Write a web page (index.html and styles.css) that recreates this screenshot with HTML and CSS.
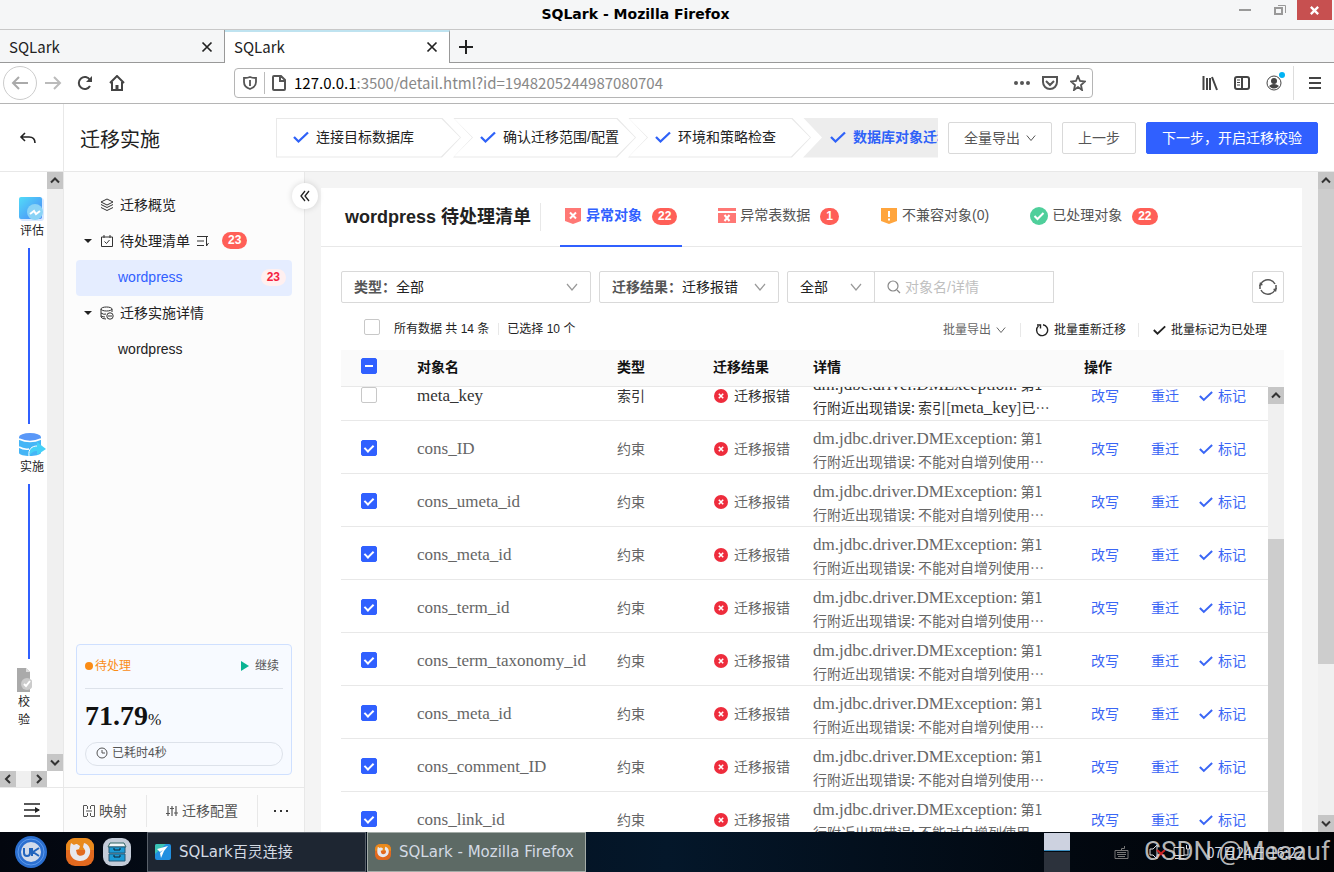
FILE: index.html
```html
<!DOCTYPE html>
<html lang="zh-CN">
<head>
    <meta charset="UTF-8">
    <meta name="viewport" content="width=device-width, initial-scale=1.0">
    <title>SQLark</title>
    <link rel="stylesheet" href="styles.css">
</head>
<body>
    <!-- shared icons -->
    <svg class="sprite" aria-hidden="true">
        <symbol id="check" viewBox="0 0 16 16"><path d="M1 8l4.500 4.500L15 3.500" fill="none" stroke="currentColor" stroke-width="2.300"/></symbol>
        <symbol id="down" viewBox="0 0 12 12"><path d="M1 3l5 6 5-6" fill="none" stroke="currentColor" stroke-width="1.200"/></symbol>
        <symbol id="close" viewBox="0 0 12 12"><path d="M1.500 1.500l9 9M10.500 1.500l-9 9" fill="none" stroke="currentColor" stroke-width="1.700"/></symbol>
        <symbol id="arrow" viewBox="0 0 16 16"><path d="M4 10l4-4 4 4" fill="none" stroke="#333" stroke-width="2"/></symbol>
        <symbol id="fail" viewBox="0 0 14 14"><circle cx="7" cy="7" r="7" fill="#ee2c3c"/><path d="M4.800 4.800l4.400 4.400M9.200 4.800l-4.400 4.400" stroke="#fff" stroke-width="1.600"/></symbol>
        <symbol id="firefox" viewBox="0 0 28 28">
            <rect width="28" height="28" rx="9" fill="#e2691f"/><path d="M0 9a9 9 0 0 1 9-9h10a9 9 0 0 1 9 9v3H0z" fill="#e88a1c"/>
            <path d="M5 5l3 2c1-1 2-1 3-1l3 2-1 3-3 1 1 4c2 3 7 2 8-1 1-3-1-4-2-6l1-4c4 1 7 5 6 10-1 5-5 8-10 8S4 19 4 14c0-3 0-6 1-9z" fill="#e8e8ee"/>
        </symbol>
    </svg>

    <div class="titlebar">
        <h1>SQLark - Mozilla Firefox</h1>
        <div class="window-buttons">
            <button aria-label="Minimize"><svg width="12" height="10" viewBox="0 0 12 10"><path d="M0 5h12" stroke="#999" stroke-width="2"/></svg></button>
            <button aria-label="Restore"><svg width="12" height="12" viewBox="0 0 12 12" fill="none" stroke="#999"><path d="M1 4h7v6H1z" stroke-width="2"/><path d="M4 1.500h7.500V9"/></svg></button>
            <button class="window-close" aria-label="Close"><svg width="11" height="11" viewBox="0 0 12 12"><path d="M2 2l8 8M10 2l-8 8" stroke="#fff" stroke-width="2.500"/></svg></button>
        </div>
    </div>

    <div class="tabstrip">
        <div class="browser-tab"><span>SQLark</span><button aria-label="Close tab"><svg width="12" height="12"><use href="#close"/></svg></button></div>
        <div class="browser-tab current"><span>SQLark</span><button aria-label="Close tab"><svg width="12" height="12"><use href="#close"/></svg></button></div>
        <button class="new-tab" aria-label="New tab"><svg width="14" height="14" viewBox="0 0 14 14"><path d="M7 0v14M0 7h14" stroke="#222" stroke-width="2"/></svg></button>
    </div>

    <div class="toolbar">
        <button class="nav-back" aria-label="Back"><svg width="18" height="16" viewBox="0 0 18 16" fill="none" stroke="#aaa" stroke-width="2"><path d="M17 8H2M8 2L2 8l6 6"/></svg></button>
        <button aria-label="Forward"><svg width="18" height="16" viewBox="0 0 18 16" fill="none" stroke="#bbb" stroke-width="2"><path d="M1 8h15M10 2l6 6-6 6"/></svg></button>
        <button aria-label="Reload"><svg width="16" height="16" viewBox="0 0 16 16" fill="none" stroke="#444" stroke-width="2"><path d="M13 11a6 6 0 1 1 0-6"/><path d="M15 1v6H9z" fill="#444" stroke="none"/></svg></button>
        <button aria-label="Home"><svg width="16" height="16" viewBox="0 0 16 16" fill="none" stroke="#444" stroke-width="2"><path d="M1 8l7-7 7 7M3 7v8h10V7"/><path d="M8 15v-5" stroke-width="3"/></svg></button>
        <div class="urlbar">
            <svg width="14" height="16" viewBox="0 0 14 16" fill="none" stroke="#555" stroke-width="1.800"><path d="M7 2C5 3 3 3 1 3v4c0 4 3 6 6 7 3-1 6-3 6-7V3c-2 0-4 0-6-1z"/><path d="M7 5v6"/></svg>
            <i class="url-sep"></i>
            <svg width="14" height="16" viewBox="0 0 14 16" fill="none" stroke="#555" stroke-width="2"><path d="M2 1h7l4 4v9a1 1 0 0 1-1 1H2a1 1 0 0 1-1-1V2a1 1 0 0 1 1-1zM8 1v5h5"/></svg>
            <span class="url"><b>127.0.0.1</b>:3500/detail.html?id=1948205244987080704</span>
            <svg width="16" height="16" viewBox="0 0 16 16" fill="#555"><circle cx="2" cy="8" r="2"/><circle cx="8" cy="8" r="2"/><circle cx="14" cy="8" r="2"/></svg>
            <svg width="16" height="16" viewBox="0 0 16 16" fill="none" stroke="#555" stroke-width="2"><path d="M1 2h14v5a7 7 0 0 1-14 0zM4 6l4 4 4-4"/></svg>
            <svg width="16" height="16" viewBox="0 0 16 16" fill="none" stroke="#555" stroke-width="1.800"><path d="M8 1l2 5 5 .5-4 3.500 1 5-4-3-4 3 1-5-4-3.500L6 6z"/></svg>
        </div>
        <div class="toolbar-end">
            <svg width="16" height="16" viewBox="0 0 16 16" fill="none" stroke="#444" stroke-width="2"><path d="M1.500 1v14M5 3v12M8 3v12M10 2l5 13"/></svg>
            <svg width="16" height="16" viewBox="0 0 16 16" fill="none" stroke="#444" stroke-width="2"><rect x="1" y="2" width="14" height="12" rx="2"/><path d="M8 2v12"/><path d="M3 5h3M3 7.500h3M3 10h3" stroke-width="1"/></svg>
            <span class="account"><svg width="16" height="16" viewBox="0 0 16 16"><circle cx="8" cy="8" r="7" fill="none" stroke="#444"/><circle cx="8" cy="6" r="3" fill="#444"/><path d="M3 11q5-4 10 0-5 5-10 0z" fill="#444"/></svg></span>
            <i class="toolbar-sep"></i>
            <svg width="12" height="14" viewBox="0 0 12 14"><path d="M0 2h12M0 7h12M0 12h12" stroke="#444" stroke-width="2"/></svg>
        </div>
    </div>

    <header class="app-header">
        <button class="back" aria-label="返回"><svg width="18" height="14" viewBox="0 0 18 14" fill="none" stroke="#222" stroke-width="1.600"><path d="M6 1L2 5l4 4M2 5h8q6 0 6 6"/></svg></button>
        <h2>迁移实施</h2>
        <ol class="steps">
            <li><svg width="16" height="16"><use href="#check"/></svg><span>连接目标数据库</span></li>
            <li><svg width="16" height="16"><use href="#check"/></svg><span>确认迁移范围/配置</span></li>
            <li><svg width="16" height="16"><use href="#check"/></svg><span>环境和策略检查</span></li>
            <li class="active"><svg width="16" height="16"><use href="#check"/></svg><span>数据库对象迁移</span></li>
        </ol>
        <div class="header-actions">
            <button class="btn">全量导出 <svg width="10" height="10"><use href="#down"/></svg></button>
            <button class="btn">上一步</button>
            <button class="btn primary">下一步，开启迁移校验</button>
        </div>
    </header>

    <div class="app">
        <aside class="rail">
            <div class="rail-view">
                <div class="rail-items">
                    <div class="rail-item">
                        <svg width="28" height="26" viewBox="0 0 28 26">
                            <defs><linearGradient id="g1" x2="1" y2="1"><stop stop-color="#52dcf8"/><stop offset="1" stop-color="#4a86f8"/></linearGradient></defs>
                            <rect x="2" y="2" width="24" height="23" rx="3" fill="#d6e8ff"/><rect x="1" y="1" width="23" height="22" rx="2" fill="url(#g1)"/>
                            <circle cx="17" cy="16" r="8" fill="#8ad3f6"/><path d="M12 18l4-3 2 3 4-3" fill="none" stroke="#fff" stroke-width="2"/>
                        </svg>
                        <span>评估</span>
                    </div>
                    <i class="rail-line"></i>
                    <div class="rail-item">
                        <svg width="30" height="26" viewBox="0 0 30 26">
                            <path d="M2 5v16c1 4 20 4 22 0V5z" fill="#45b5f6"/><ellipse cx="13" cy="5" rx="11" ry="4" fill="#5a98f8"/>
                            <path d="M2 7q11 5 22 0M2 15q5 3 10 2" fill="none" stroke="#fff" stroke-width="1.500"/>
                            <path d="M12 24c-1-7 3-10 8-10v-4l9 7-9 6v-4c-3 0-5 1-8 5z" fill="#45d0f7"/>
                            <path d="M12 24c-1-7 3-10 8-10" fill="none" stroke="#fff"/>
                        </svg>
                        <span>实施</span>
                    </div>
                    <i class="rail-line"></i>
                    <div class="rail-item narrow">
                        <svg width="16" height="26" viewBox="0 0 16 26"><path d="M1 1h9l4 4v20H1z" fill="#aaa"/><path d="M10 1v4h4z" fill="#ddd"/><circle cx="11" cy="17" r="6" fill="#ccc"/><path d="M8 17l2 2 4-5" fill="none" stroke="#fff" stroke-width="2"/></svg>
                        <span>校验</span>
                    </div>
                </div>
                <div class="scrollbar"><svg><use href="#arrow"/></svg><i></i><svg class="flip"><use href="#arrow"/></svg></div>
            </div>
            <div class="scrollbar-x"><svg class="left"><use href="#arrow"/></svg><svg class="right"><use href="#arrow"/></svg></div>
            <button class="rail-toggle" aria-label="展开"><svg width="18" height="16" viewBox="0 0 18 16"><path d="M1 2h16M1 8h15M1 14h16" stroke="#222" stroke-width="1.500"/><path d="M12 5l5 3-5 3z" fill="#222"/></svg></button>
        </aside>

        <nav class="sidebar">
            <ul class="tree">
                <li><a href="#"><i></i><svg width="14" height="14" viewBox="0 0 14 14" fill="none" stroke="#333"><path d="M7 1l6 3-6 3-6-3zM1 6.500l6 3 6-3M1 9.500l6 3 6-3"/></svg>迁移概览</a></li>
                <li><a href="#"><i class="caret"></i><svg width="14" height="14" viewBox="0 0 14 14" fill="none" stroke="#333"><path d="M1.500 3h11v9.500h-11zM4 1v3M10 1v3M4.500 7.500l2 2 3-3.500"/></svg>待处理清单
                    <svg width="13" height="12" viewBox="0 0 13 12" fill="none" stroke="#333"><path d="M1 1.500h11M1 6h7M1 10.500h7M10.500 1v10l2-3"/></svg><b class="badge">23</b></a></li>
                <li><a href="#" class="leaf selected">wordpress <b class="badge light">23</b></a></li>
                <li><a href="#"><i class="caret"></i><svg width="14" height="14" viewBox="0 0 14 14" fill="none" stroke="#333"><ellipse cx="6.500" cy="3" rx="5.500" ry="2"/><path d="M1 3v8q1 2 5 2M12 3v3M1 7q3 2 5 1M1 10q2 1 4 1"/><circle cx="10" cy="10" r="3.200"/><path d="M8 10h4"/></svg>迁移实施详情</a></li>
                <li><a href="#" class="leaf">wordpress</a></li>
            </ul>
            <section class="progress-card">
                <div class="progress-top">
                    <span class="pending">待处理</span>
                    <button><svg width="9" height="10" viewBox="0 0 9 10"><path d="M1 0l8 5-8 5z" fill="#0ab393"/></svg>继续</button>
                </div>
                <p class="percent">71.79<small>%</small></p>
                <p class="elapsed"><svg width="12" height="12" viewBox="0 0 12 12" fill="none" stroke="#555"><circle cx="6" cy="6" r="5"/><path d="M6 3v3h3"/></svg>已耗时4秒</p>
            </section>
            <div class="sidebar-foot">
                <button><svg width="12" height="12" viewBox="0 0 12 12" fill="none" stroke="#555"><path d="M4 .5H.5v11H4M8 .5h3.500v11H8M4.500 1v3M7.500 1v3M4.500 8v3M7.500 8v3M3 6h6"/></svg>映射</button>
                <button class="wide"><svg width="12" height="12" viewBox="0 0 12 12" fill="none" stroke="#555" stroke-width="1.200"><path d="M2 1v10M6 1v10M10 1v10M0 8.500h4M4 3.500h4M8 8h4"/></svg>迁移配置</button>
                <button class="more" aria-label="更多"><svg width="16" height="4" viewBox="0 0 16 4" fill="#333"><path d="M1 1h2v2H1zM7 1h2v2H7zM13 1h2v2h-2z"/></svg></button>
            </div>
            <button class="collapse" aria-label="收起"><svg width="10" height="12" viewBox="0 0 10 12" fill="none" stroke="#222" stroke-width="1.300"><path d="M5 1L1 6l4 5M9 1L5 6l4 5"/></svg></button>
        </nav>

        <main class="content">
            <section class="panel">
                <div class="panel-head">
                    <h3>wordpress 待处理清单</h3>
                    <div class="tabs">
                        <button class="tab active"><svg width="18" height="18" viewBox="0 0 18 18"><path d="M1 1h16v13l-8 3-8-3z" fill="#ff7875"/><path d="M6 5.500l6 6M12 5.500l-6 6" stroke="#fff" stroke-width="2"/></svg>异常对象<b class="badge">22</b></button>
                        <button class="tab"><svg width="18" height="18" viewBox="0 0 18 18"><path d="M0 1h18v3H0zM0 6h18v10H0z" fill="#ff7875"/><path d="M6.500 8l5 6M11.500 8l-5 6" stroke="#fff" stroke-width="2"/></svg>异常表数据<b class="badge">1</b></button>
                        <button class="tab"><svg width="18" height="18" viewBox="0 0 18 18"><path d="M1 1h16v13l-8 3-8-3z" fill="#ffa53d"/><path d="M9 4v6M9 11.500v2" stroke="#fff" stroke-width="2"/></svg>不兼容对象(0)</button>
                        <button class="tab"><svg width="18" height="18" viewBox="0 0 18 18"><circle cx="9" cy="9" r="9" fill="#4fcf9b"/><path d="M4.500 9l3 3 6-6" fill="none" stroke="#fff" stroke-width="2"/></svg>已处理对象<b class="badge">22</b></button>
                    </div>
                </div>

                <div class="filters">
                    <label class="select-box type"><b>类型：</b><select><option>全部</option></select><svg width="12" height="12"><use href="#down"/></svg></label>
                    <label class="select-box result"><b>迁移结果：</b><select><option>迁移报错</option></select><svg width="12" height="12"><use href="#down"/></svg></label>
                    <div class="search">
                        <label class="select-box scope"><select aria-label="范围"><option>全部</option></select><svg width="12" height="12"><use href="#down"/></svg></label>
                        <label class="search-box"><svg width="14" height="14" viewBox="0 0 14 14" fill="none" stroke="#888" stroke-width="1.200"><circle cx="6" cy="6" r="5"/><path d="M10 10l3 3"/></svg><input type="text" placeholder="对象名/详情" aria-label="搜索"></label>
                    </div>
                    <button class="refresh" aria-label="刷新"><svg width="20" height="20" viewBox="0 0 20 20" fill="none" stroke="#555" stroke-width="1.500"><path d="M3 7a8 8 0 0 1 14 0M17 13a8 8 0 0 1-14 0M2 8v4M18 8v4"/><path d="M2 5l3 3-4 1zM18 15l-3-3 4-1z" fill="#555" stroke="none"/></svg></button>
                </div>

                <div class="bulk">
                    <label class="all"><input type="checkbox">所有数据 共 14 条</label>
                    <span class="picked">已选择 10 个</span>
                    <div class="bulk-actions">
                        <button class="muted">批量导出<svg width="10" height="10"><use href="#down"/></svg></button>
                        <button><svg width="14" height="14" viewBox="0 0 14 14" fill="none" stroke="#222" stroke-width="1.400"><path d="M8 1.700A5.500 5.500 0 1 1 3.500 3"/><path d="M2 2h3.500v3.500"/></svg>批量重新迁移</button>
                        <button><svg width="13" height="14"><use href="#check"/></svg>批量标记为已处理</button>
                    </div>
                </div>

                <div class="table-wrap">
                    <div class="table-scroll" id="table-scroll">
                        <table>
                            <thead>
                                <tr>
                                    <th class="col-check"><input type="checkbox" id="check-all" aria-label="全选"></th>
                                    <th class="col-name">对象名</th>
                                    <th class="col-type">类型</th>
                                    <th class="col-result">迁移结果</th>
                                    <th>详情</th>
                                    <th class="col-ops">操作</th>
                                </tr>
                            </thead>
                            <tbody id="rows"></tbody>
                        </table>
                    </div>
                    <div class="table-bar">
                        <div class="scrollbar"><svg><use href="#arrow"/></svg><i class="thumb"></i></div>
                    </div>
                </div>
            </section>
            <div class="scrollbar page-bar"><svg><use href="#arrow"/></svg><i class="thumb"></i><svg class="flip"><use href="#arrow"/></svg></div>
        </main>
    </div>

    <footer class="taskbar">
        <button class="start" aria-label="Menu"><svg width="34" height="34" viewBox="0 0 34 34"><circle cx="17" cy="17" r="16" fill="#2b6fd0"/><circle cx="17" cy="17" r="13" fill="none" stroke="#5d9aec"/><circle cx="17" cy="17" r="10" fill="#d2dbea"/><path d="M10 13v5q0 3 3 3t3-3v-5M18 13v8M25 13l-6 4 6 4" fill="none" stroke="#2264bd" stroke-width="2"/></svg></button>
        <button aria-label="Firefox"><svg width="28" height="28"><use href="#firefox"/></svg></button>
        <button aria-label="Files"><svg width="28" height="28" viewBox="0 0 28 28"><rect width="28" height="28" rx="9" fill="#c3cbd8"/><path d="M7 5h14l2 4H5z" fill="#f0f4f8" stroke="#366"/><path d="M6 9h16v6H6zM6 16h16v7H6z" fill="#1c9bd6" stroke="#245a78"/><path d="M11 10v2h6v-2M11 17v2h6v-2" fill="none" stroke="#123"/></svg></button>
        <div class="tasks">
            <button class="task"><svg width="16" height="16" viewBox="0 0 16 16"><rect width="16" height="16" rx="2" fill="#218fe0"/><path d="M0 2a2 2 0 0 1 2-2h9L0 10z" fill="#3bc3b5"/><path d="M2 5l11-3-4 5-3 7-1-5 3-3-3 2z" fill="#fff"/></svg>SQLark百灵连接</button>
            <button class="task current"><svg width="16" height="16"><use href="#firefox"/></svg>SQLark - Mozilla Firefox</button>
        </div>
        <div class="pager"><i></i><i></i></div>
        <div class="tray">
            <svg width="15" height="13" viewBox="0 0 15 13" fill="none" stroke="#777"><path d="M1 4.500h13v8H1zM7.500 4V2.500h3V0M3 6.500h9M3 8.500h9M4 10.500h7"/></svg>
            <svg class="sound" width="18" height="16" viewBox="0 0 18 16" fill="none"><path d="M1 5h3l4-4v14l-4-4H1z" stroke="#ddd"/><path d="M8 6l8 7M16 6l-8 7" stroke="#c22" stroke-width="2"/></svg>
            <svg width="18" height="16" viewBox="0 0 18 16" fill="none" stroke="#ddd"><path d="M1 3.500h10v8H1zM6.500 11v3M2 14.500h9M13.500 1v4h3V1M15 5v6h-4"/></svg>
            <span>07月24日 16:22</span>
        </div>
        <div class="watermark">CSDN @Meaauf</div>
    </footer>

    <script>
        const selfIncrement = "不能对自增列使用…";
        const objects = [
            { name: "meta_key", type: "索引", error: "索引[<span class=\"latin\">meta_key</span>]已…", checked: false },
            { name: "cons_ID", type: "约束", error: selfIncrement, checked: true },
            { name: "cons_umeta_id", type: "约束", error: selfIncrement, checked: true },
            { name: "cons_meta_id", type: "约束", error: selfIncrement, checked: true },
            { name: "cons_term_id", type: "约束", error: selfIncrement, checked: true },
            { name: "cons_term_taxonomy_id", type: "约束", error: selfIncrement, checked: true },
            { name: "cons_meta_id", type: "约束", error: selfIncrement, checked: true },
            { name: "cons_comment_ID", type: "约束", error: selfIncrement, checked: true },
            { name: "cons_link_id", type: "约束", error: selfIncrement, checked: true }
        ];

        document.getElementById("rows").innerHTML = objects.map(item => `
            <tr class="${item.checked ? "" : "strong"}">
                <td class="col-check"><input type="checkbox" aria-label="${item.name}" ${item.checked ? "checked" : ""}></td>
                <td><span class="latin">${item.name}</span></td>
                <td>${item.type}</td>
                <td><span class="status"><svg width="14" height="14"><use href="#fail"/></svg>迁移报错</span></td>
                <td><p class="detail"><span class="latin">dm.jdbc.driver.DMException:</span> 第1行附近出现错误: ${item.error}</p></td>
                <td><div class="ops"><a href="#">改写</a><a href="#">重迁</a><a href="#"><svg width="14" height="16"><use href="#check"/></svg>标记</a></div></td>
            </tr>`).join("");

        document.getElementById("check-all").indeterminate = true;
        document.getElementById("table-scroll").scrollTop = 19;
    </script>
</body>
</html>
```

FILE: styles.css
```css
*,
*::before,
*::after {
    box-sizing: border-box;
}

body {
    margin: 0;
    height: 100vh;
    display: flex;
    flex-direction: column;
    overflow: hidden;
    background: #fff;
    color: #222;
    font-family: "Liberation Sans", "Noto Sans CJK SC", sans-serif;
    font-size: 14px;
    line-height: 22px;
}

h1, h2, h3, p, ul, ol {
    margin: 0;
    padding: 0;
}

li {
    list-style: none;
}

button {
    display: inline-flex;
    align-items: center;
    justify-content: center;
    padding: 0;
    border: none;
    background: none;
    color: inherit;
    font: inherit;
    white-space: nowrap;
    cursor: pointer;
}

a {
    color: inherit;
    text-decoration: none;
}

svg {
    flex: none;
}

.sprite {
    position: absolute;
    width: 0;
    height: 0;
}

/* browser window */
.titlebar {
    flex: none;
    display: flex;
    align-items: flex-start;
    height: 30px;
    padding-right: 2px;
    background: #f5f6f7;
    border-bottom: 1px solid #c8c8c8;
}

.titlebar h1 {
    flex: 1;
    padding-left: 44px;
    font: bold 14px/28px "DejaVu Sans", sans-serif;
    color: #000;
    text-align: center;
}

.window-buttons {
    display: flex;
}

.window-buttons button {
    width: 35px;
    height: 20px;
}

.window-buttons .window-close {
    background: #c75050;
}

.tabstrip {
    flex: none;
    display: flex;
    height: 33px;
    background: #f5f6f7;
    box-shadow: inset 0 -1px #999;
    font: 15px/22px "Noto Sans CJK SC", sans-serif;
    color: #222;
}

.browser-tab {
    display: flex;
    align-items: center;
    justify-content: space-between;
    width: 225px;
    padding: 1px 11px 0 9px;
    border-right: 1px solid #999;
}

.browser-tab.current {
    border-top: 2px solid #bfe3f0;
    padding-top: 0;
    padding-bottom: 1px;
    background: #fff;
}

.new-tab {
    width: 32px;
}

.toolbar {
    flex: none;
    display: flex;
    align-items: center;
    height: 41px;
    padding: 0 13px 0 3px;
    border-bottom: 1px solid #b5b5b5;
}

.toolbar > button {
    width: 32px;
    height: 34px;
}

.toolbar > .nav-back {
    width: 34px;
    border: 1px solid #ccc;
    border-radius: 50%;
}

.urlbar {
    flex: 1;
    display: flex;
    align-items: center;
    gap: 12px;
    height: 30px;
    margin: 0 109px 0 101px;
    padding: 0 6px 0 8px;
    border: 1px solid #b5b5b5;
    border-radius: 4px;
    font: 15px/24px "Noto Sans CJK SC", sans-serif;
    color: #888;
}

.url {
    flex: 1;
    margin-left: -4px;
}

.url b {
    font-weight: normal;
    color: #000;
}

.url-sep {
    width: 1px;
    height: 22px;
    margin: 0 -5px;
    background: #bbb;
}

.toolbar-end {
    display: flex;
    align-items: center;
    gap: 16px;
}

.account {
    position: relative;
    height: 16px;
}

.account::after {
    content: "";
    position: absolute;
    top: -3px;
    right: -3px;
    width: 6px;
    height: 6px;
    border-radius: 50%;
    background: #00b3f4;
}

.toolbar-sep {
    width: 1px;
    height: 34px;
    margin: 0 -1px 0 -5px;
    background: #ddd;
}

/* app header */
.app-header {
    flex: none;
    display: flex;
    align-items: center;
    height: 68px;
    padding-right: 16px;
    border-bottom: 1px solid #e8e8e8;
}

.back {
    align-self: stretch;
    width: 64px;
    padding: 2px 8px 0 0;
    border-right: 1px solid #e8e8e8;
}

.app-header h2 {
    width: 212px;
    padding: 4px 0 0 16px;
    font-size: 20px;
    font-weight: normal;
    line-height: 30px;
}

.steps {
    flex: 1;
    min-width: 0;
    display: flex;
    overflow: hidden;
}

.steps li {
    --chevron: polygon(0 0, calc(100% - 19px) 0, 100% 50%, calc(100% - 19px) 100%, 0 100%, 19px 50%);
    flex: none;
    position: relative;
    display: flex;
    align-items: center;
    gap: 7px;
    width: 183px;
    height: 40px;
    margin-left: -8px;
    padding: 0 0 1px 27px;
    background: #e9e9e9;
    clip-path: var(--chevron);
    white-space: nowrap;
}

.steps li::before {
    content: "";
    position: absolute;
    inset: 1px;
    background: #fff;
    clip-path: var(--chevron);
}

.steps li:first-child {
    --chevron: polygon(0 0, calc(100% - 19px) 0, 100% 50%, calc(100% - 19px) 100%, 0 100%);
    width: 185px;
    margin-left: 0;
    padding-left: 17px;
}

.steps li > * {
    position: relative;
}

.steps svg {
    color: #2f62f8;
}

.steps .active {
    background: #ededed;
    color: #2f62f8;
    font-weight: bold;
}

.steps .active::before {
    display: none;
}

.header-actions {
    display: flex;
    gap: 10px;
    margin-left: 10px;
}

.btn {
    gap: 6px;
    height: 32px;
    padding: 0 15px;
    border: 1px solid #d9d9d9;
    border-radius: 2px;
    color: #555;
}

.btn.primary {
    border-color: #3060ff;
    background: #3060ff;
    color: #fff;
}

.app {
    flex: 1;
    min-height: 0;
    display: flex;
}

/* scrollbars */
.scrollbar {
    flex: none;
    display: flex;
    flex-direction: column;
    width: 16px;
    background: #f0f0f0;
}

.scrollbar svg,
.scrollbar-x svg {
    width: 16px;
    height: 17px;
    background: #c6c6c6;
}

.scrollbar i {
    flex: 1;
}

.scrollbar .flip {
    margin-top: auto;
    transform: rotate(180deg);
}

.scrollbar-x {
    display: flex;
    justify-content: space-between;
    width: 47px;
    height: 16px;
    background: #f0f0f0;
}

.scrollbar-x svg {
    height: 16px;
}

.left {
    transform: rotate(-90deg);
}

.right {
    transform: rotate(90deg);
}

/* stage rail */
.rail {
    flex: none;
    display: flex;
    flex-direction: column;
    width: 64px;
    border-right: 1px solid #e8e8e8;
}

.rail-view {
    flex: 1;
    min-height: 0;
    display: flex;
}

.rail-items {
    flex: 1;
    display: flex;
    flex-direction: column;
    padding: 24px 0 42px 17px;
    font-size: 12px;
    line-height: 18px;
}

.rail-item {
    display: flex;
    flex-direction: column;
    align-items: center;
    width: 30px;
}

.rail-item.narrow {
    width: 14px;
    text-align: center;
}

.rail-line {
    flex: 1;
    width: 2px;
    margin: 8px 0 8px 11px;
    background: #3060ff;
}

.rail-toggle {
    height: 45px;
    border-top: 1px solid #e8e8e8;
}

/* sidebar */
.sidebar {
    position: relative;
    flex: none;
    display: flex;
    flex-direction: column;
    width: 241px;
    background: #fcfcfc;
    border-right: 1px solid #e8e8e8;
}

.tree {
    flex: 1;
    padding: 16px 12px 0;
}

.tree a {
    display: flex;
    align-items: center;
    gap: 6px;
    height: 36px;
    padding: 0 0 2px 8px;
    border-radius: 4px;
}

.tree i {
    width: 10px;
}

.caret::before {
    content: "";
    display: block;
    width: 8px;
    border: 4px solid transparent;
    border-top-color: #222;
    border-bottom: none;
}

.tree .leaf {
    justify-content: space-between;
    padding: 0 6px 2px 42px;
}

.tree .selected {
    background: #e5edff;
    color: #3060ff;
}

.badge {
    display: inline-block;
    padding: 0 6px;
    border-radius: 9px;
    background: #ff5f57;
    color: #fff;
    font-size: 12px;
    line-height: 17px;
}

.tree .badge {
    margin-left: 7px;
    margin-bottom: 2px;
}

.tree .badge.light {
    margin-bottom: 0;
    background: #fff0f0;
    color: #f5223d;
}

.collapse {
    position: absolute;
    top: 11px;
    right: -14px;
    width: 26px;
    height: 26px;
    border-radius: 50%;
    background: #fff;
    box-shadow: 0 0 6px rgba(0, 0, 0, 0.15);
}

.progress-card {
    margin: 0 12px 12px;
    padding: 8px;
    background: #f7faff;
    border: 1px solid #cfe0ff;
    border-radius: 4px;
    font-size: 12px;
    color: #555;
}

.progress-top {
    display: flex;
    justify-content: space-between;
    padding: 2px 4px 11px 0;
    border-bottom: 1px solid #dde2ea;
}

.progress-top button {
    gap: 6px;
}

.pending {
    display: flex;
    align-items: center;
    gap: 2px;
    color: #fa8c16;
}

.pending::before {
    content: "";
    width: 8px;
    height: 8px;
    border-radius: 50%;
    background: #fa8c16;
}

.percent {
    padding: 10px 0 5px;
    font: bold 28px/34px "Liberation Serif", serif;
    color: #111;
}

.percent small {
    font-size: 16px;
    font-weight: normal;
}

.elapsed {
    display: flex;
    align-items: center;
    gap: 4px;
    height: 24px;
    padding: 0 10px 3px;
    border: 1px solid #dde2ea;
    border-radius: 12px;
}

.sidebar-foot {
    display: flex;
    align-items: center;
    height: 45px;
    padding-top: 2px;
    border-top: 1px solid #e8e8e8;
    color: #555;
}

.sidebar-foot button {
    flex: 1 0 auto;
    gap: 4px;
    height: 32px;
    padding: 0 16px;
}

.sidebar-foot .wide {
    border: solid #e8e8e8;
    border-width: 0 1px;
}

.sidebar-foot .more {
    padding: 0 12px;
}

/* content */
.content {
    flex: 1;
    min-width: 0;
    display: flex;
    gap: 16px;
    padding-left: 16px;
    background: #f4f4f4;
}

.panel {
    flex: 1;
    min-width: 0;
    display: flex;
    flex-direction: column;
    margin-top: 16px;
    background: #fff;
}

.page-bar .thumb {
    flex: 0 0 72%;
    background: #cdcdcd;
}

.panel-head {
    flex: none;
    display: flex;
    align-items: center;
    height: 59px;
    padding-left: 24px;
    border-bottom: 1px solid #e8e8e8;
}

.panel-head h3 {
    width: 196px;
    margin-right: 19px;
    border-right: 1px solid #e8e8e8;
    font-size: 18px;
    line-height: 28px;
    white-space: nowrap;
}

.tabs {
    display: flex;
    gap: 32px;
    height: 59px;
}

.tab {
    gap: 4px;
    padding: 0 5px 3px 4px;
    border-bottom: 2px solid transparent;
    color: #555;
}

.tab svg,
.tab .badge {
    margin-top: 3px;
}

.tab .badge {
    margin-left: 6px;
}

.tab.active {
    border-color: #3060ff;
    color: #3060ff;
    font-weight: bold;
}

.filters {
    display: flex;
    gap: 8px;
    padding: 24px 18px 0 20px;
}

.select-box {
    display: flex;
    align-items: center;
    height: 32px;
    padding: 0 12px;
    border: 1px solid #d9d9d9;
    border-radius: 2px;
    color: #999;
}

.select-box b {
    color: #555;
    white-space: nowrap;
}

.select-box select {
    flex: 1;
    min-width: 0;
    padding: 0;
    border: none;
    background: none;
    color: #222;
    font: inherit;
    appearance: none;
}

.type {
    width: 250px;
}

.result {
    width: 180px;
}

.scope {
    width: 88px;
}

.search {
    display: flex;
}

.search-box {
    display: flex;
    align-items: center;
    gap: 4px;
    width: 180px;
    margin-left: -1px;
    padding: 0 12px;
    border: 1px solid #d9d9d9;
}

.search-box input {
    flex: 1;
    min-width: 0;
    padding: 0;
    border: none;
    outline: none;
    font: inherit;
}

.search-box input::placeholder {
    color: #bfbfbf;
}

.refresh {
    width: 32px;
    height: 32px;
    margin-left: auto;
    border: 1px solid #d9d9d9;
    border-radius: 2px;
}

.bulk {
    display: flex;
    align-items: center;
    height: 47px;
    padding: 4px 35px 0 43px;
    font-size: 12px;
}

.all {
    display: flex;
    align-items: center;
    gap: 14px;
}

.all input {
    margin-bottom: 3px;
}

.picked {
    margin-left: 9px;
    padding-left: 8px;
    border-left: 1px solid #e8e8e8;
    line-height: 12px;
}

.bulk-actions {
    display: flex;
    margin-left: auto;
    padding-top: 2px;
    line-height: 12px;
}

.bulk-actions button {
    gap: 5px;
    padding: 0 12px 0 14px;
    border-right: 1px solid #e8e8e8;
}

.bulk-actions button:last-child {
    padding-right: 0;
    border: none;
}

.bulk-actions .muted {
    padding-right: 14px;
    color: #666;
}

input[type="checkbox"] {
    position: relative;
    display: block;
    flex: none;
    width: 16px;
    height: 16px;
    margin-top: 0;
    margin-left: 0;
    margin-right: 0;
    border: 1px solid #c8c8c8;
    border-radius: 2px;
    background: #fff;
    appearance: none;
}

input[type="checkbox"]:checked,
input[type="checkbox"]:indeterminate {
    border-color: #3060ff;
    background: #3060ff;
}

input[type="checkbox"]:checked::after {
    content: "";
    position: absolute;
    top: 2px;
    left: 4px;
    width: 6px;
    height: 9px;
    border: solid #fff;
    border-width: 0 2px 2px 0;
    transform: rotate(45deg);
}

input[type="checkbox"]:indeterminate::after {
    content: "";
    position: absolute;
    top: 6px;
    left: 3px;
    width: 8px;
    height: 2px;
    background: #fff;
}

/* object table */
.table-wrap {
    flex: 1;
    min-height: 0;
    display: flex;
    margin: 0 18px 0 20px;
}

.table-scroll {
    flex: 1;
    overflow: hidden;
}

.table-bar {
    display: flex;
    padding-top: 37px;
    background: #fafafa;
}

.table-bar .thumb {
    margin-top: 135px;
    background: #cdcdcd;
}

table {
    width: 100%;
    border-spacing: 0;
    table-layout: fixed;
    color: #666;
}

td {
    height: 53px;
    padding: 4px 0 0 16px;
    border-bottom: 1px solid #e8e8e8;
    text-align: left;
}

th {
    position: sticky;
    z-index: 1;
    top: 0;
    height: 37px;
    padding: 0 0 2px 16px;
    border-bottom: 1px solid #e8e8e8;
    background: #fafafa;
    color: #111;
    text-align: left;
}

.col-check {
    width: 60px;
    padding-left: 20px;
}

td.col-check {
    padding-top: 1px;
}

td.col-check input {
    margin-bottom: 0;
}

th.col-check input {
    margin-bottom: 2px;
}

.col-name {
    width: 200px;
}

.col-type {
    width: 96px;
}

.col-result {
    width: 100px;
}

.col-ops {
    width: 200px;
}

.strong {
    color: #333;
}

.latin {
    font-family: "Liberation Serif", serif;
    font-size: 17px;
}

.status {
    display: flex;
    align-items: center;
    gap: 6px;
}

.status svg {
    margin-left: 1px;
}

.detail {
    max-width: 240px;
    font-family: "Noto Sans CJK SC", sans-serif;
}

.ops {
    display: flex;
    gap: 32px;
    padding-left: 7px;
    color: #3a66f5;
}

.ops a {
    display: flex;
    align-items: center;
    gap: 5px;
}

.ops a:last-child {
    margin-left: -12px;
}

/* desktop taskbar */
.taskbar {
    position: relative;
    flex: none;
    display: flex;
    align-items: center;
    gap: 9px;
    height: 40px;
    padding: 0 30px 0 14px;
    background: linear-gradient(90deg, #03060e, #04172a 50%, #020810 80%, #010306);
    color: #d4dae4;
    font-family: "DejaVu Sans", "Noto Sans CJK SC", sans-serif;
    font-size: 15px;
    overflow: hidden;
}

.start {
    margin-right: 9px;
}

.tasks {
    align-self: stretch;
    display: flex;
    gap: 1px;
    margin-left: 7px;
}

.task {
    justify-content: flex-start;
    gap: 8px;
    width: 219px;
    padding: 0 7px;
    border: 1px solid #59606a;
    background: #1e2632;
    font-size: 14px;
}

.task.current {
    border-color: #a4aca8;
    background: #5d6a65;
}

.task {
    font-size: 15px;
}

.pager {
    align-self: stretch;
    display: grid;
    grid-template-rows: 18px 20px;
    gap: 1px;
    width: 26px;
    margin-left: auto;
    padding-top: 1px;
}

.pager i:first-child {
    background: #cdd2e0;
    border-bottom: 1px solid #3d8fc0;
}

.pager i:last-child {
    background: #2c323c;
}

.tray {
    display: flex;
    align-items: center;
    gap: 16px;
    margin-left: 35px;
    font-family: "Noto Sans CJK SC", sans-serif;
    font-size: 14px;
    white-space: nowrap;
}

.sound {
    margin: 0 -10px 0 4px;
}

.watermark {
    position: absolute;
    right: 4px;
    bottom: 4px;
    color: rgba(215, 215, 215, 0.85);
    font: 26px/34px Roboto, sans-serif;
}
```
